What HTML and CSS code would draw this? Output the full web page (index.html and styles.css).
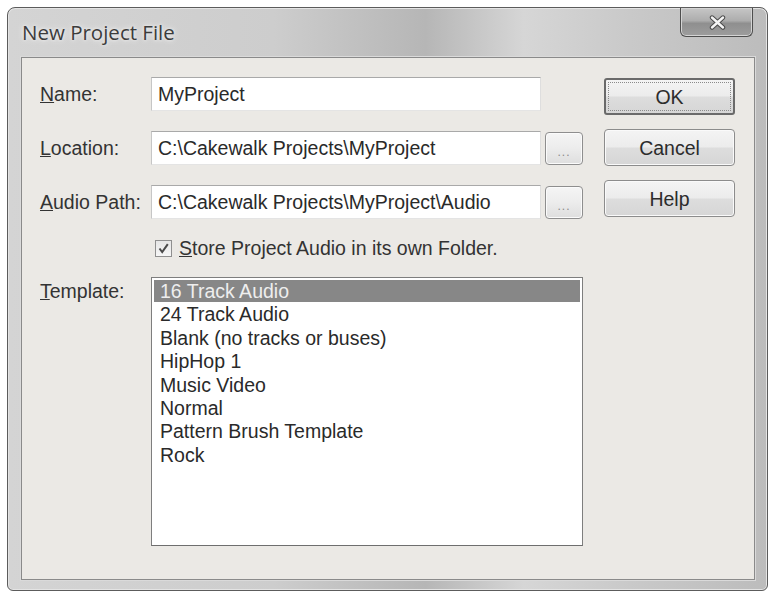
FILE: index.html
```html
<!DOCTYPE html>
<html lang="en">
<head>
<meta charset="utf-8">
<title>New Project File</title>
<link rel="stylesheet" href="styles.css">
</head>
<body>
<div class="window">
  <div class="titlebar">
    <span class="title">New Project File</span>
    <div class="close">
      <svg width="17" height="15" viewBox="0 0 17 15">
        <path d="M3 2.5 L14 12.5 M14 2.5 L3 12.5" stroke="#4a4a4a" stroke-width="4.4" stroke-linecap="round" fill="none"/>
        <path d="M3 2.5 L14 12.5 M14 2.5 L3 12.5" stroke="#f4f4f4" stroke-width="2.4" stroke-linecap="round" fill="none"/>
      </svg>
    </div>
  </div>
  <div class="client">
    <div class="form">
      <label class="label"><u>N</u>ame:</label>
      <div class="input">MyProject</div>
      <span></span>

      <label class="label"><u>L</u>ocation:</label>
      <div class="input">C:\Cakewalk Projects\MyProject</div>
      <div class="browse"><span>...</span></div>

      <label class="label"><u>A</u>udio Path:</label>
      <div class="input">C:\Cakewalk Projects\MyProject\Audio</div>
      <div class="browse"><span>...</span></div>

      <span></span>
      <div class="check-row">
        <span class="checkbox">
          <svg width="13" height="13" viewBox="0 0 13 13">
            <path d="M2.5 6.5 L5.2 10 L10.8 2.2" stroke="#4a4a4a" stroke-width="2" fill="none"/>
          </svg>
        </span>
        <span class="check-text"><u>S</u>tore Project Audio in its own Folder.</span>
      </div>

      <label class="label label-top"><u>T</u>emplate:</label>
      <div class="listbox">
        <div class="item selected">16 Track Audio</div>
        <div class="item">24 Track Audio</div>
        <div class="item">Blank (no tracks or buses)</div>
        <div class="item">HipHop 1</div>
        <div class="item">Music Video</div>
        <div class="item">Normal</div>
        <div class="item">Pattern Brush Template</div>
        <div class="item">Rock</div>
      </div>
    </div>
    <div class="buttons">
      <div class="btn btn-default"><span class="focus">OK</span></div>
      <div class="btn">Cancel</div>
      <div class="btn">Help</div>
    </div>
  </div>
</div>
</body>
</html>
```

FILE: styles.css
```css
html, body {
  margin: 0;
  padding: 0;
  background: #ffffff;
}

body {
  font-family: "Liberation Sans", Arial, sans-serif;
  font-size: 19.5px;
  color: #333333;
}

.window {
  margin: 7px 0 0 7px;
  width: 761px;
  height: 584px;
  box-sizing: border-box;
  border: 1px solid #5c5c5c;
  border-radius: 8px 8px 6px 6px;
  background:
    linear-gradient(to right, #d4d4d4 0%, #cdcdcd 35%, #b6b6b6 55%, #d6d6d6 68%, #c9c9c9 82%, #bcbcbc 100%);
  display: flex;
  flex-direction: column;
  padding: 0 12px 10px 13px;
  box-shadow: inset 0 0 0 1px #e4e4e4;
}

.titlebar {
  height: 49px;
  display: flex;
  align-items: flex-start;
  flex-shrink: 0;
}

.title {
  font-family: "Open Sans", "Noto Sans", sans-serif;
  font-size: 20.5px;
  line-height: 26px;
  margin-top: 11px;
  padding-left: 1px;
  color: #3c3c3c;
  text-shadow: 0 0 6px #f2f2f2, 0 0 3px #f2f2f2;
}

.close {
  margin-left: auto;
  margin-right: 2px;
  width: 73px;
  height: 29px;
  box-sizing: border-box;
  border: 1px solid #4e4e4e;
  border-top: none;
  border-radius: 0 0 6px 6px;
  background: linear-gradient(to bottom, #c6c6c6 0%, #adadad 45%, #8f8f8f 55%, #9d9d9d 100%);
  box-shadow: inset 0 0 0 1px #d4d4d4;
  display: flex;
  align-items: center;
  justify-content: center;
}

.close svg {
  display: block;
  margin-left: 2px;
}

.client {
  flex: 1;
  border: 1px solid #8a8a8a;
  background: #ebe9e5;
  display: flex;
  align-items: flex-start;
  padding: 19px 0 0 18px;
  box-shadow: 0 0 0 1px #dadada;
}

.form {
  display: grid;
  grid-template-columns: 111px 390px 42px;
  grid-template-rows: 34px 34px 34px 18px 269px;
  row-gap: 20px;
  align-items: center;
}

.label {
  line-height: 22px;
  color: #333333;
}

.label-top {
  align-self: start;
  padding-top: 3px;
}

.input {
  height: 34px;
  box-sizing: border-box;
  background: #ffffff;
  border: 1px solid;
  border-color: #a9a9a9 #dedede #e4e4e4 #c6c6c6;
  padding-left: 6px;
  line-height: 32px;
  color: #2a2a2a;
  white-space: nowrap;
  overflow: hidden;
}

.browse {
  justify-self: end;
  width: 38px;
  height: 33px;
  box-sizing: border-box;
  border: 1px solid #8e8e8e;
  border-radius: 4px;
  background: linear-gradient(to bottom, #f5f5f5 0%, #ececec 50%, #dedede 100%);
  box-shadow: inset 0 0 0 1px #fbfbfb;
  display: flex;
  align-items: flex-end;
  justify-content: center;
}

.browse span {
  font-size: 12px;
  line-height: 12px;
  color: #8a8a8a;
  padding-bottom: 6px;
  letter-spacing: 1px;
}

.check-row {
  grid-column: 2 / 4;
  display: flex;
  align-items: center;
  padding-left: 4px;
}

.checkbox {
  width: 17px;
  height: 17px;
  box-sizing: border-box;
  border: 1px solid #8f8f8f;
  background: linear-gradient(to bottom, #e6e6e6, #f6f6f6);
  display: flex;
  align-items: center;
  justify-content: center;
}

.checkbox svg {
  display: block;
}

.check-text {
  margin-left: 7px;
  line-height: 22px;
  color: #333333;
}

.listbox {
  grid-column: 2 / 4;
  align-self: stretch;
  box-sizing: border-box;
  border: 1px solid #7e7e7e;
  border-bottom-color: #6e6e6e;
  background: #ffffff;
  padding: 2px;
}

.item {
  height: 23.4px;
  line-height: 23px;
  padding-left: 6px;
  color: #2a2a2a;
  white-space: nowrap;
}

.item.selected {
  background: #878787;
  color: #eeeeee;
  height: 22px;
  line-height: 22px;
  margin-bottom: 1.4px;
}

.buttons {
  margin-left: 21px;
  margin-top: 1px;
  width: 131px;
  display: flex;
  flex-direction: column;
  gap: 14px;
}

.btn {
  height: 37px;
  box-sizing: border-box;
  border: 1px solid #8c8c8c;
  border-radius: 4px;
  background: linear-gradient(to bottom, #f4f4f4 0%, #ececec 48%, #dddddd 52%, #d6d6d6 100%);
  box-shadow: inset 0 0 0 1px #fafafa;
  display: flex;
  align-items: center;
  justify-content: center;
  color: #2c2c2c;
  line-height: 22px;
}

.btn-default {
  border: 2px solid #6a6a6a;
  border-radius: 3px;
  padding: 2px;
  box-shadow: none;
}

.btn-default .focus {
  flex: 1;
  align-self: stretch;
  border: 1px dotted #8a8a8a;
  display: flex;
  align-items: center;
  justify-content: center;
}
```
